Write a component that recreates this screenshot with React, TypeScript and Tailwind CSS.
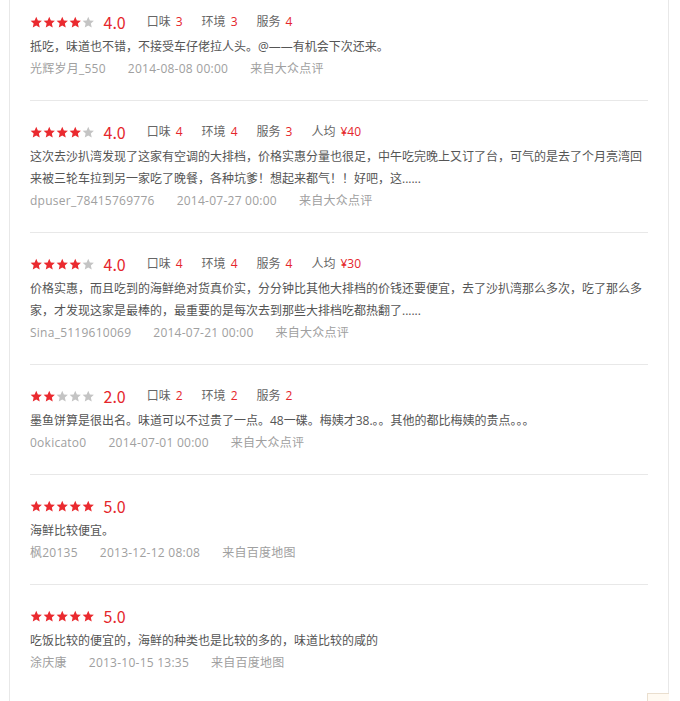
import React from "react";

type Review = {
  score: number;
  taste?: number;
  env?: number;
  service?: number;
  avg?: string;
  text: string;
  user: string;
  time: string;
  source: string;
};

const reviews: Review[] = [
  {
    score: 4,
    taste: 3,
    env: 3,
    service: 4,
    text: "抵吃，味道也不错，不接受车仔佬拉人头。@——有机会下次还来。",
    user: "光辉岁月_550",
    time: "2014-08-08 00:00",
    source: "来自大众点评",
  },
  {
    score: 4,
    taste: 4,
    env: 4,
    service: 3,
    avg: "¥40",
    text: "这次去沙扒湾发现了这家有空调的大排档，价格实惠分量也很足，中午吃完晚上又订了台，可气的是去了个月亮湾回来被三轮车拉到另一家吃了晚餐，各种坑爹！想起来都气！！好吧，这......",
    user: "dpuser_78415769776",
    time: "2014-07-27 00:00",
    source: "来自大众点评",
  },
  {
    score: 4,
    taste: 4,
    env: 4,
    service: 4,
    avg: "¥30",
    text: "价格实惠，而且吃到的海鲜绝对货真价实，分分钟比其他大排档的价钱还要便宜，去了沙扒湾那么多次，吃了那么多家，才发现这家是最棒的，最重要的是每次去到那些大排档吃都热翻了......",
    user: "Sina_5119610069",
    time: "2014-07-21 00:00",
    source: "来自大众点评",
  },
  {
    score: 2,
    taste: 2,
    env: 2,
    service: 2,
    text: "墨鱼饼算是很出名。味道可以不过贵了一点。48一碟。梅姨才38.。。其他的都比梅姨的贵点。。。",
    user: "0okicato0",
    time: "2014-07-01 00:00",
    source: "来自大众点评",
  },
  {
    score: 5,
    text: "海鲜比较便宜。",
    user: "枫20135",
    time: "2013-12-12 08:08",
    source: "来自百度地图",
  },
  {
    score: 5,
    text: "吃饭比较的便宜的，海鲜的种类也是比较的多的，味道比较的咸的",
    user: "涂庆康",
    time: "2013-10-15 13:35",
    source: "来自百度地图",
  },
];

function Star({ on }: { on: boolean }) {
  return (
    <svg width="12.5" height="12.5" viewBox="0 0 24 24" className="shrink-0">
      <path
        d="M12 1.5l3.1 7.1 7.7.7-5.8 5.1 1.7 7.6L12 18l-6.7 4 1.7-7.6-5.8-5.1 7.7-.7z"
        fill={on ? "#ea2a2f" : "#c4c4c4"}
      />
    </svg>
  );
}

function Sub({ label, value }: { label: string; value?: number | string }) {
  if (value === undefined) return null;
  return (
    <span className="mr-[19px] flex items-center text-[12px] text-[#666]">
      {label}
      <span className="ml-[5px] text-[#e5262c]">{value}</span>
    </span>
  );
}

function Item({ r }: { r: Review }) {
  return (
    <div className="border-b border-[#e8e8e8] pt-[17px] pb-[20px] first:pt-[8px] last:border-b-0">
      {/* rating line */}
      <div className="flex h-[28px] items-center">
        <div className="flex items-center gap-[0.5px]">
          {[1, 2, 3, 4, 5].map((i) => (
            <Star key={i} on={i <= r.score} />
          ))}
        </div>
        <span
          className="ml-[9px] mr-[21px] text-[16px] leading-none text-[#e5262c]"
          style={{ fontFamily: '"Noto Sans CJK SC", sans-serif' }}
        >
          {r.score}.0
        </span>
        <Sub label="口味" value={r.taste} />
        <Sub label="环境" value={r.env} />
        <Sub label="服务" value={r.service} />
        <Sub label="人均" value={r.avg} />
      </div>
      <p className="text-[12px] leading-[22px] text-[#555]">{r.text}</p>
      <div className="flex gap-[22px] text-[12px] leading-[22px] tracking-[0.25px] text-[#a0a0a0]">
        <span>{r.user}</span>
        <span>{r.time}</span>
        <span>{r.source}</span>
      </div>
    </div>
  );
}

export default function App() {
  return (
    <div
      className="relative h-[701px] w-[680px] overflow-hidden bg-white"
      style={{ fontFamily: '"Open Sans", "Noto Sans CJK SC", sans-serif' }}
    >
      <div className="ml-[9px] h-full w-[660px] border-x border-[#e8e8e8] px-[20px]">
        {reviews.map((r, i) => (
          <Item key={i} r={r} />
        ))}
      </div>
      {/* back-to-top tab, mostly cut off */}
      <div className="absolute left-[647px] top-[693px] h-[12px] w-[22px] border-l border-t border-[#eadfcf] bg-[#fffaf2]" />
    </div>
  );
}
